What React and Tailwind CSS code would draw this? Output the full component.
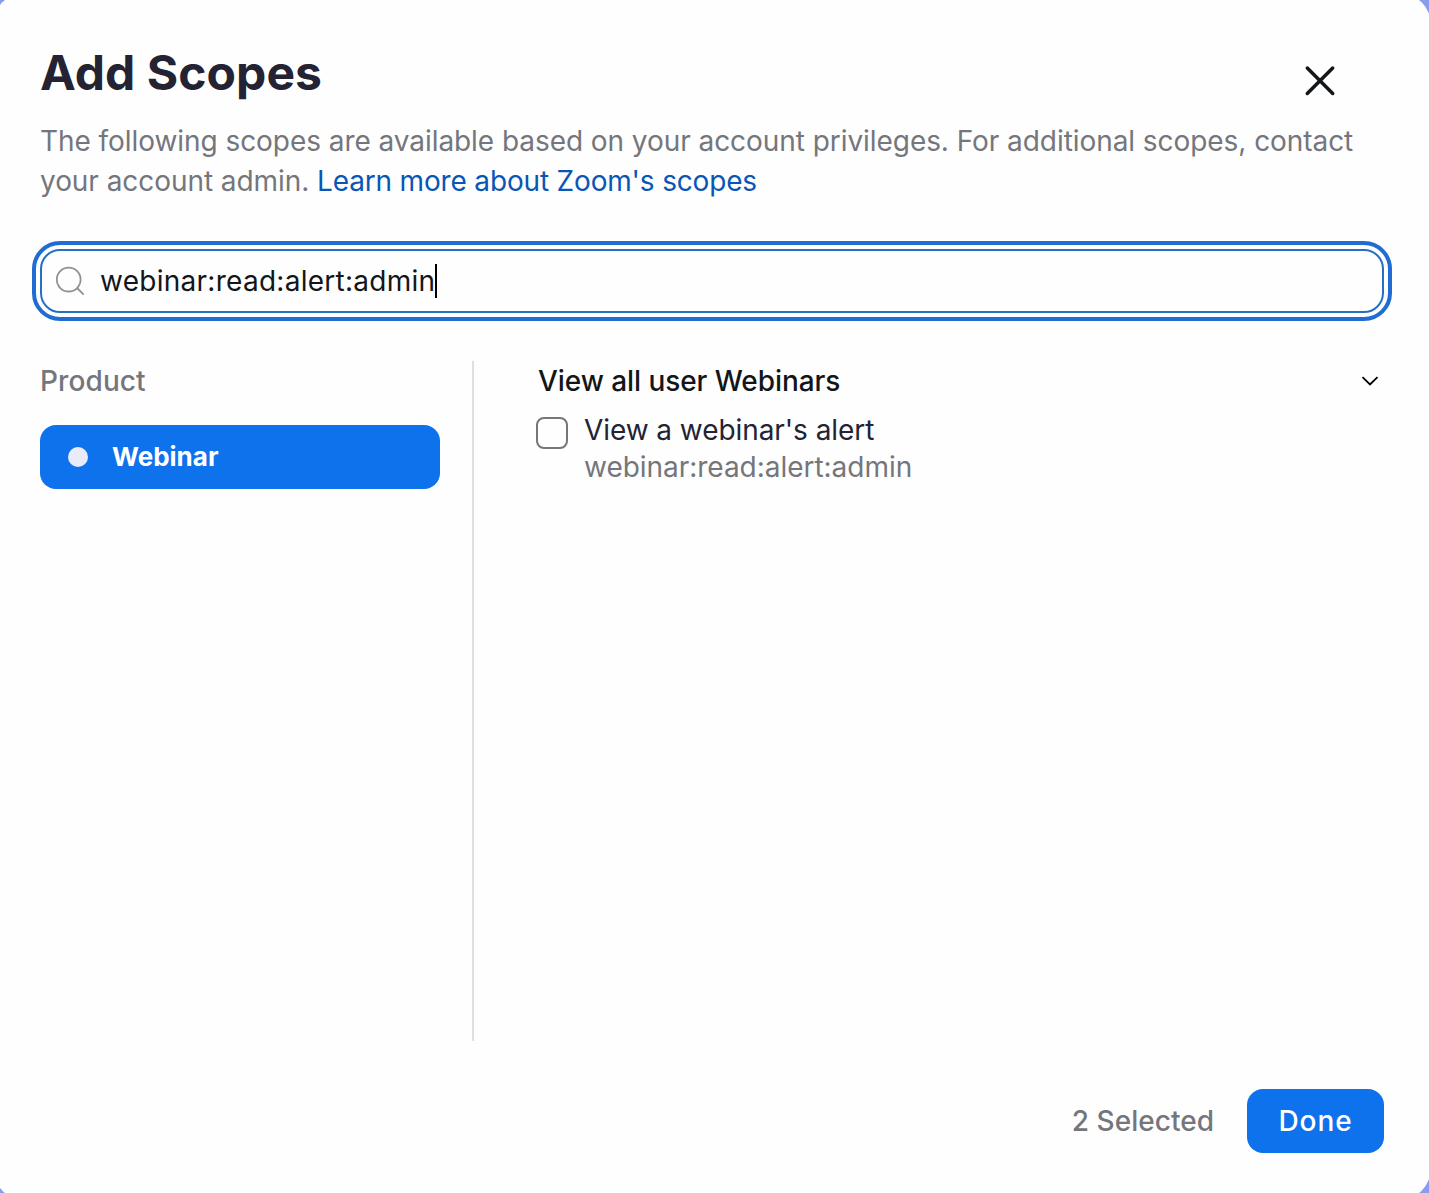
import { useState } from "react";

const products = [
  { id: "webinar", name: "Webinar" },
];

const scopes = [
  {
    id: "webinar:read:alert:admin",
    label: "View a webinar's alert",
  },
];

function CloseIcon() {
  return (
    <svg
      viewBox="0 0 32 32"
      className="w-8 h-8"
      fill="none"
      stroke="currentColor"
      strokeWidth="3.5"
      strokeLinecap="round"
    >
      <path d="M3.3 3 28.7 28.4M28.7 3 3.3 28.4" />
    </svg>
  );
}

function SearchIcon() {
  return (
    <svg
      viewBox="0 0 30 30"
      className="w-[30px] h-[30px] text-[#909096]"
      fill="none"
      stroke="currentColor"
      strokeWidth="1.8"
    >
      <circle cx="13.7" cy="13.6" r="11.9" />
      <path d="M22.1 22 28.7 28.6" />
    </svg>
  );
}

function ChevronIcon() {
  return (
    <svg
      viewBox="0 0 18 10"
      className="w-[18px] h-[10px]"
      fill="none"
      stroke="currentColor"
      strokeWidth="1.8"
    >
      <path d="M1.5 1.2 9 8.4 16.5 1.2" />
    </svg>
  );
}

export default function App() {
  const [query] = useState("webinar:read:alert:admin");
  const [active, setActive] = useState("webinar");
  const [checked, setChecked] = useState(false);

  return (
    <div className="w-[1429px] h-[1193px] overflow-hidden bg-[#8b9cf0] font-['Inter',sans-serif]">
      <div className="-ml-[7px] -mt-[7px] w-[1438px] h-[1207px] rounded-[32px] bg-[#fefefe] pt-[7px] pl-[47px] pr-[47px] flex flex-col">
        <header className="pt-[41px] h-[201px]">
          <div className="flex justify-between h-[80px]">
            <h1 className="text-[48px] leading-[64px] font-bold tracking-[0.05px] text-[#232333]">
              Add Scopes
            </h1>
            <button type="button" className="w-8 h-8 mt-6 mr-12 text-[#131619]">
              <CloseIcon />
            </button>
          </div>
          <p className="text-[28px] leading-[40px] tracking-[-0.06px] text-[#74767c] whitespace-nowrap">
            The following scopes are available based on your account privileges. For additional scopes, contact
            <br />
            your account admin.{" "}
            <a href="#" className="tracking-[-0.17px] text-[#0956b5]">
              Learn more about Zoom's scopes
            </a>
          </p>
        </header>

        <div className="mt-12 flex items-center h-16 w-[1344px] shrink-0 rounded-[20px] border-2 border-[#2670c4] pl-[13px] outline-4 outline-offset-4 outline-[#1f6dd2]">
          <SearchIcon />
          <span className="ml-[15px] text-[28px] leading-[40px] tracking-[0.27px] text-[#131619]">
            {query}
          </span>
          <span className="w-[2px] h-[34px] bg-black" />
        </div>

        <div className="mt-12 flex h-[680px] w-[1344px]">
          <aside className="w-[434px] pr-8 border-r-2 border-[#dfdfe1]">
            <h2 className="text-[28px] leading-[40px] tracking-[0.1px] font-medium text-[#74767c]">
              Product
            </h2>
            {products.map((product) => (
              <button
                key={product.id}
                type="button"
                onClick={() => setActive(product.id)}
                className={`mt-6 flex items-center w-[400px] h-16 pl-7 rounded-2xl text-[26px] font-bold ${
                  active === product.id
                    ? "bg-[#0e72ed] text-white"
                    : "text-[#232333]"
                }`}
              >
                <span className="w-5 h-5 mr-6 rounded-full bg-[#e9ebf8]" />
                <span className="pb-0.5">{product.name}</span>
              </button>
            ))}
          </aside>

          <section className="flex-1 pl-[62px]">
            <div className="flex items-center justify-between pl-[2px] pr-[5px]">
              <h3 className="text-[28px] leading-[40px] tracking-[-0.07px] font-medium text-[#131619]">
                View all user Webinars
              </h3>
              <ChevronIcon />
            </div>
            {scopes.map((scope) => (
              <label key={scope.id} className="mt-[11px] flex items-start">
                <input
                  type="checkbox"
                  checked={checked}
                  onChange={() => setChecked(!checked)}
                  className="appearance-none mt-[5px] w-8 h-8 rounded-lg border-2 border-[#74767c] checked:bg-[#0e72ed]"
                />
                <span className="ml-4 flex flex-col text-[28px] leading-[37px] tracking-[-0.03px]">
                  <span className="tracking-[-0.07px] text-[#232333]">{scope.label}</span>
                  <span className="text-[#74767c]">{scope.id}</span>
                </span>
              </label>
            ))}
          </section>
        </div>

        <footer className="mt-12 flex items-center justify-end w-[1344px]">
          <span className="text-[28px] leading-[40px] tracking-[0.03px] font-medium text-[#74767c]">
            2 Selected
          </span>
          <button
            type="button"
            className="ml-[33px] w-[137px] h-16 rounded-2xl bg-[#0e72ed] text-white text-[28px] tracking-[0.9px] font-medium"
          >
            Done
          </button>
        </footer>
      </div>
    </div>
  );
}
